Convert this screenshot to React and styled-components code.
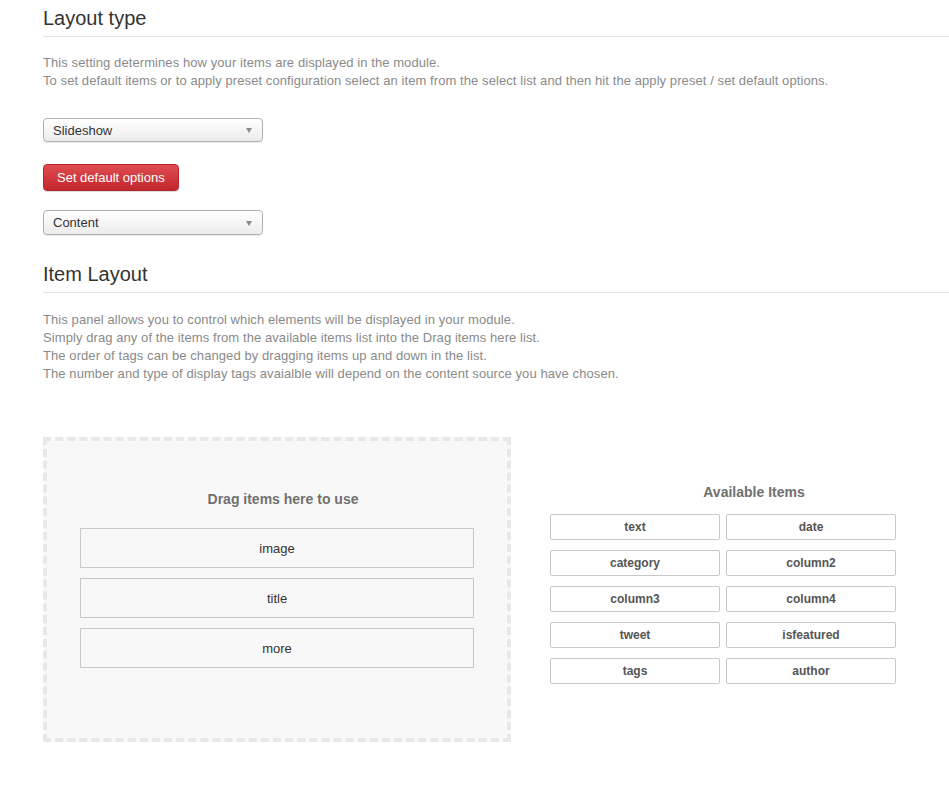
import React from "react";
import styled, { createGlobalStyle } from "styled-components";

const GlobalStyle = createGlobalStyle`
    body {
        margin: 0;
        background: #fff;
        font-family: "Liberation Sans", Arial, sans-serif;
        color: #333;
    }
`;

const Page = styled.div`
    padding: 0 0 40px 43px;
    width: 949px;
    box-sizing: border-box;
`;

const Heading = styled.h2`
    margin: ${(p) => p.$top || 6}px 0 0;
    padding-bottom: 6px;
    font-size: 20px;
    line-height: 24px;
    font-weight: normal;
    color: #333;
    border-bottom: 1px solid #e2e2e2;
`;

const Text = styled.p`
    margin: ${(p) => p.$top || 17}px 0 0;
    font-size: 13px;
    line-height: 18px;
    letter-spacing: 0.08px;
    color: #8a8a8a;
`;

const Select = styled.div`
    position: relative;
    box-sizing: border-box;
    width: 220px;
    height: ${(p) => p.$h || 24}px;
    margin-top: ${(p) => p.$top}px;
    padding: 0 10px 0 9px;
    display: flex;
    align-items: center;
    font-size: 13px;
    color: #333;
    border: 1px solid #b0b0b0;
    border-radius: 4px;
    background: linear-gradient(#ffffff, #ececec);
    box-shadow: 0 1px 1px rgba(0, 0, 0, 0.08);
`;

const Arrow = styled.span`
    position: absolute;
    right: 10px;
    top: 50%;
    margin-top: -2px;
    border-left: 3.5px solid transparent;
    border-right: 3.5px solid transparent;
    border-top: 5px solid #8a8a8a;
`;

const RedButton = styled.button`
    display: block;
    margin-top: 22px;
    height: 27px;
    padding: 0 13px;
    font-family: "Liberation Sans", Arial, sans-serif;
    font-size: 13px;
    color: #fff;
    border: 1px solid #b0262c;
    border-radius: 4px;
    background: linear-gradient(#e04c51, #c1282e);
    box-shadow: 0 1px 1px rgba(0, 0, 0, 0.15);
`;

const Board = styled.div`
    display: flex;
    align-items: flex-start;
    gap: 39px;
    margin-top: 54px;
`;

const DropZone = styled.div`
    box-sizing: border-box;
    width: 468px;
    height: 305px;
    padding: 48px 33px 0;
    background: #f8f8f8;
    border: 4px dashed #e8e8e8;
`;

const ZoneTitle = styled.div`
    text-align: center;
    font-size: 14px;
    line-height: 20px;
    font-weight: bold;
    color: #707070;
    padding-left: ${(p) => p.$shift * 2}px;
    margin-bottom: ${(p) => p.$gap}px;
`;

const UsedList = styled.div`
    display: flex;
    flex-direction: column;
    gap: 10px;
`;

const UsedItem = styled.div`
    height: 40px;
    box-sizing: border-box;
    display: flex;
    align-items: center;
    justify-content: center;
    font-size: 13px;
    color: #333;
    border: 1px solid #c8c8c8;
    background: #f8f8f8;
`;

const Available = styled.div`
    width: 346px;
    margin-top: 45px;
`;

const Grid = styled.div`
    display: grid;
    grid-template-columns: 170px 170px;
    column-gap: 6px;
    row-gap: 10px;
`;

const Tag = styled.div`
    height: 26px;
    box-sizing: border-box;
    display: flex;
    align-items: center;
    justify-content: center;
    font-size: 12px;
    font-weight: bold;
    color: #555;
    border: 1px solid #c8c8c8;
    border-radius: 2px;
    background: #fff;
`;

const used = ["image", "title", "more"];
const tags = ["text", "date", "category", "column2", "column3", "column4", "tweet", "isfeatured", "tags", "author"];

const App = () => {
    return (
        <>
            <GlobalStyle />
            <Page>
                <Heading>Layout type</Heading>
                <Text>
                    This setting determines how your items are displayed in the module.
                    <br />
                    To set default items or to apply preset configuration select an item from the select list and then hit the apply preset / set default options.
                </Text>
                <Select $top={28}>
                    Slideshow
                    <Arrow />
                </Select>
                <RedButton>Set default options</RedButton>
                <Select $top={19} $h={25}>
                    Content
                    <Arrow />
                </Select>

                <Heading $top={27}>Item Layout</Heading>
                <Text $top={18}>
                    This panel allows you to control which elements will be displayed in your module.
                    <br />
                    Simply drag any of the items from the available items list into the Drag items here list.
                    <br />
                    The order of tags can be changed by dragging items up and down in the list.
                    <br />
                    The number and type of display tags avaialble will depend on the content source you have chosen.
                </Text>

                <Board>
                    <DropZone>
                        <ZoneTitle $gap={19} $shift={6}>Drag items here to use</ZoneTitle>
                        <UsedList>
                            {used.map((u) => (
                                <UsedItem key={u}>{u}</UsedItem>
                            ))}
                        </UsedList>
                    </DropZone>
                    <Available>
                        <ZoneTitle $gap={12} $shift={31}>Available Items</ZoneTitle>
                        <Grid>
                            {tags.map((t) => (
                                <Tag key={t}>{t}</Tag>
                            ))}
                        </Grid>
                    </Available>
                </Board>
            </Page>
        </>
    );
};

export default App;
